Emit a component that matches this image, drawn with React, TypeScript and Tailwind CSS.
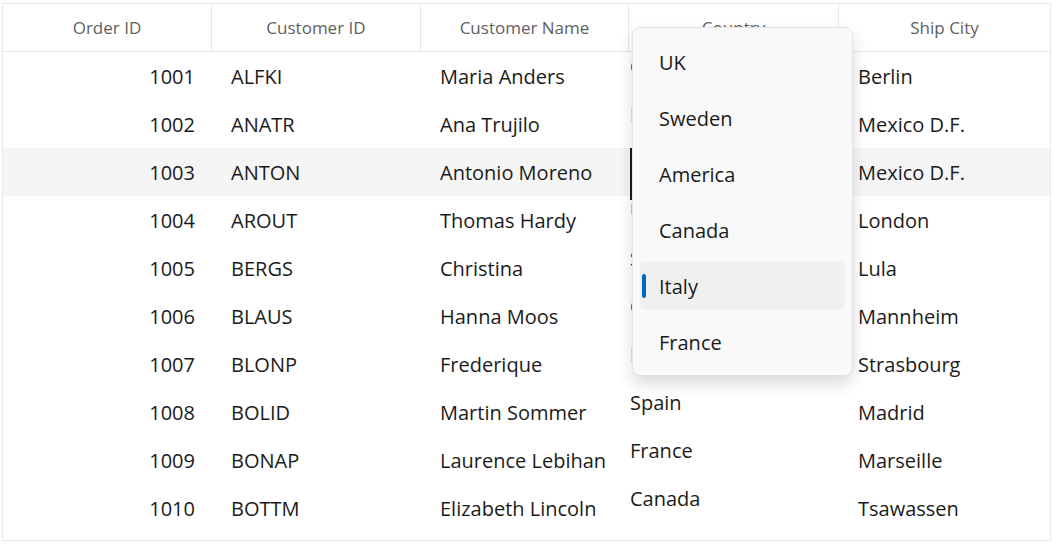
import React from "react";

const rows = [
  ["1001", "ALFKI", "Maria Anders", "Germany", "Berlin"],
  ["1002", "ANATR", "Ana Trujilo", "Mexico", "Mexico D.F."],
  ["1003", "ANTON", "Antonio Moreno", "Mexico", "Mexico D.F."],
  ["1004", "AROUT", "Thomas Hardy", "UK", "London"],
  ["1005", "BERGS", "Christina", "Sweden", "Lula"],
  ["1006", "BLAUS", "Hanna Moos", "Germany", "Mannheim"],
  ["1007", "BLONP", "Frederique", "France", "Strasbourg"],
  ["1008", "BOLID", "Martin Sommer", "Spain", "Madrid"],
  ["1009", "BONAP", "Laurence Lebihan", "France", "Marseille"],
  ["1010", "BOTTM", "Elizabeth Lincoln", "Canada", "Tsawassen"],
];

const headers = ["Order ID", "Customer ID", "Customer Name", "Country", "Ship City"];
const options = ["UK", "Sweden", "America", "Canada", "Italy", "France"];

export default function App() {
  return (
    <div
      className="relative w-[1054px] h-[544px] bg-white overflow-hidden"
      style={{ fontFamily: '"Segoe UI", "Open Sans", sans-serif' }}
    >
      <div className="ml-[2px] mt-[3px] w-[1049px] h-[538px] border border-[#e8e8e8]">
        <div className="grid grid-cols-[209px_209px_208px_210px_1fr] h-[48px] border-b border-[#e8e8e8]">
          {headers.map((h, i) => (
            <div
              key={h}
              className={`flex items-center justify-center text-[17px] text-[#5f5f5f] ${
                i < 4 ? "border-r border-[#e8e8e8]" : ""
              }`}
            >
              {h}
            </div>
          ))}
        </div>
        {rows.map((r, idx) => (
          <div
            key={r[0]}
            className={`grid grid-cols-[209px_209px_208px_210px_1fr] h-[48px] text-[20px] text-[#1b1b1b] ${
              idx === 2 ? "bg-[#f5f5f5]" : ""
            }`}
          >
            <div className="flex items-center justify-end pr-[17px] pb-[2px]">{r[0]}</div>
            <div className="flex items-center pl-[19px] pb-[2px]">{r[1]}</div>
            <div className="flex items-center pl-[19px] pb-[2px]">{r[2]}</div>
            <div
              className={`flex items-center pb-[22px] ml-[1px] ${
                idx === 2 ? "border-l-2 border-[#1b1b1b]" : ""
              }`}
            >
              {r[3]}
            </div>
            <div className="flex items-center pl-[19px] pb-[2px]">{r[4]}</div>
          </div>
        ))}
      </div>

      <div className="absolute left-[632px] top-[27px] w-[221px] h-[349px] rounded-[8px] bg-[#f9f9f9] border border-[#e3e3e3] shadow-[0_8px_16px_rgba(0,0,0,0.14)] px-[7px] pt-[10px] flex flex-col gap-[8px]">
        {options.map((o) => {
          const sel = o === "Italy";
          return (
            <div
              key={o}
              className={`relative h-[48px] shrink-0 rounded-[5px] flex items-center pl-[19px] pt-[2px] text-[20px] text-[#1b1b1b] ${
                sel ? "bg-[#f0f0f0]" : ""
              }`}
            >
              {sel && (
                <span className="absolute left-[2px] top-[12px] w-[4px] h-[24px] rounded-full bg-[#0067c0]" />
              )}
              {o}
            </div>
          );
        })}
      </div>
    </div>
  );
}
